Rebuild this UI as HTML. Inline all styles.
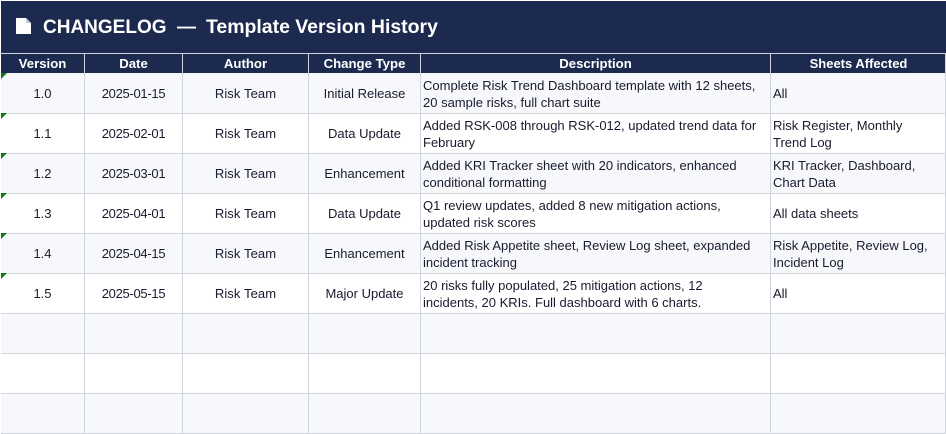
<!DOCTYPE html>
<html><head><meta charset="utf-8">
<style>
html,body{margin:0;padding:0;background:#fff;width:946px;height:434px;overflow:hidden}
body{position:relative;font-family:"Liberation Sans",Arial,sans-serif}
#title{position:absolute;left:1px;top:1px;width:945px;height:52px;background:#1b2a4e;color:#fff;font-weight:bold;font-size:19px;line-height:53px;white-space:pre}
#title span{position:absolute;top:0}
#title svg{position:absolute;left:15px;top:17px}
table{position:absolute;left:1px;top:53px;border-collapse:separate;border-spacing:0;table-layout:fixed;width:945px}
th,td{box-sizing:border-box;padding:0;border-right:1px solid #d0d2dc;border-bottom:1px solid #d0d2dc;overflow:hidden;white-space:nowrap}
th{background:#1b2a4e;color:#fff;font-size:13.2px;font-weight:bold;height:20px;text-align:center;border-top:1px solid #d0d2dc;border-bottom:0;line-height:18px}
td{height:40px;font-size:13px;line-height:17px;color:#1a1a2e;text-align:center;background:#fff}
tr.a td{background:#f7f8fb}
tr.f td{height:41px;padding-top:1px}
td.l{text-align:left;padding-left:2px}
td.d{letter-spacing:-.3px}
td.r{letter-spacing:.1px}
b.t{position:absolute;left:1px;width:0;height:0;border-top:6px solid #0b7a12;border-right:6px solid transparent}
</style></head><body>
<div id="title"><svg width="15" height="16" viewBox="0 0 15 16"><path d="M0 0H10L15 5V16H0Z" fill="#fff"/><path d="M10 0L15 5H10Z" fill="#c9ccd6"/></svg><span style="left:42px">CHANGELOG</span><span style="left:176px">—</span><span style="left:205px;font-size:19.45px">Template Version History</span></div>
<table>
<colgroup><col style="width:84px"><col style="width:98px"><col style="width:126px"><col style="width:112px"><col style="width:350px"><col style="width:175px"></colgroup>
<tr><th>Version</th><th>Date</th><th>Author</th><th>Change Type</th><th>Description</th><th style="font-size:13px;padding-left:1px">Sheets Affected</th></tr>
<tr class="a f"><td>1.0</td><td class="d">2025-01-15</td><td class="r">Risk Team</td><td>Initial Release</td><td class="l">Complete Risk Trend Dashboard template with 12 sheets,<br>20 sample risks, full chart suite</td><td class="l">All</td></tr>
<tr><td>1.1</td><td class="d">2025-02-01</td><td class="r">Risk Team</td><td>Data Update</td><td class="l">Added RSK-008 through RSK-012, updated trend data for<br>February</td><td class="l">Risk Register, Monthly<br>Trend Log</td></tr>
<tr class="a"><td>1.2</td><td class="d">2025-03-01</td><td class="r">Risk Team</td><td>Enhancement</td><td class="l">Added KRI Tracker sheet with 20 indicators, enhanced<br>conditional formatting</td><td class="l">KRI Tracker, Dashboard,<br>Chart Data</td></tr>
<tr><td>1.3</td><td class="d">2025-04-01</td><td class="r">Risk Team</td><td>Data Update</td><td class="l">Q1 review updates, added 8 new mitigation actions,<br>updated risk scores</td><td class="l">All data sheets</td></tr>
<tr class="a"><td>1.4</td><td class="d">2025-04-15</td><td class="r">Risk Team</td><td>Enhancement</td><td class="l">Added Risk Appetite sheet, Review Log sheet, expanded<br>incident tracking</td><td class="l">Risk Appetite, Review Log,<br>Incident Log</td></tr>
<tr><td>1.5</td><td class="d">2025-05-15</td><td class="r">Risk Team</td><td>Major Update</td><td class="l">20 risks fully populated, 25 mitigation actions, 12<br>incidents, 20 KRIs. Full dashboard with 6 charts.</td><td class="l">All</td></tr>
<tr class="a"><td></td><td></td><td></td><td></td><td></td><td></td></tr>
<tr><td></td><td></td><td></td><td></td><td></td><td></td></tr>
<tr class="a"><td></td><td></td><td></td><td></td><td></td><td></td></tr>
</table>
<b class="t" style="top:73px"></b><b class="t" style="top:113px"></b><b class="t" style="top:153px"></b><b class="t" style="top:193px"></b><b class="t" style="top:233px"></b><b class="t" style="top:273px"></b>
</body></html>
